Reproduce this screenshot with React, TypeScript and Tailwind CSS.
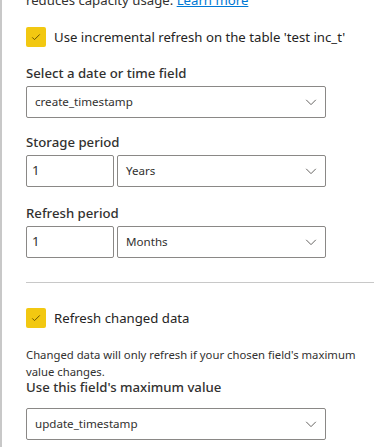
import React from "react";

const FONT = { fontFamily: "'Segoe UI', 'Noto Sans', 'Open Sans', sans-serif" };

function Chevron() {
  return (
    <svg viewBox="0 0 16 16" className="w-[14px] h-[14px] text-[#605e5c]" fill="none" stroke="currentColor" strokeWidth="1.1">
      <path d="M2.5 5.5L8 11l5.5-5.5" />
    </svg>
  );
}

function Check({ label }: { label: string }) {
  return (
    <div className="flex items-center gap-2 h-5">
      <span className="w-5 h-5 rounded-[2px] bg-[#f2c811] flex items-center justify-center shrink-0">
        <svg viewBox="0 0 16 16" className="w-3 h-3 text-[#5c4a00]" fill="none" stroke="currentColor" strokeWidth="1.2">
          <path d="M3 8.5l3 3 7-7" />
        </svg>
      </span>
      <span className="text-[13.2px] leading-5 text-[#252423]">{label}</span>
    </div>
  );
}

function Select({ value, className = "" }: { value: string; className?: string }) {
  return (
    <div className={`h-8 border border-[#8a8886] rounded-[2px] bg-white flex items-center justify-between pl-2 pr-[7px] ${className}`}>
      <span className="text-[11.6px] text-[#323130]">{value}</span>
      <Chevron />
    </div>
  );
}

function Label({ children, className = "" }: { children: React.ReactNode; className?: string }) {
  return <div className={`text-[13.2px] font-medium text-[#323130] leading-5 ${className}`}>{children}</div>;
}

function Period({ label, unit }: { label: string; unit: string }) {
  return (
    <div>
      <Label className="mb-[3px]">{label}</Label>
      <div className="flex gap-[3px] w-[300px]">
        <div className="w-[88px] h-8 border border-[#8a8886] rounded-[2px] flex items-center px-[5px] text-[13.2px] text-[#323130]">1</div>
        <Select value={unit} className="flex-1" />
      </div>
    </div>
  );
}

export default function App() {
  return (
    <div style={FONT} className="h-[447px] w-[374px] overflow-hidden bg-white border-l-2 border-[#c8c8c8]">
      <div className="-mt-[10px] pl-6">
        <p className="text-[13.2px] leading-5 text-[#323130]">
          reduces capacity usage. <span className="text-[#0078d4] underline">Learn more</span>
        </p>
        <div className="mt-[17px]">
          <Check label="Use incremental refresh on the table 'test inc_t'" />
        </div>
        <Label className="mt-[16px]">Select a date or time field</Label>
        <Select value="create_timestamp" className="mt-[3px] w-[300px]" />
        <div className="mt-[14px]">
          <Period label="Storage period" unit="Years" />
        </div>
        <div className="mt-[16px]">
          <Period label="Refresh period" unit="Months" />
        </div>
        <div className="mt-[24px] border-t border-[#c8c8c8]" />
        <div className="mt-[25px]">
          <Check label="Refresh changed data" />
        </div>
        <p className="mt-[18px] w-[344px] text-[11.3px] leading-[17px] text-[#323130]">
          Changed data will only refresh if your chosen field's maximum value changes.
        </p>
        <Label className="-mt-[3px]">Use this field's maximum value</Label>
        <Select value="update_timestamp" className="mt-[11px] w-[300px]" />
      </div>
    </div>
  );
}
